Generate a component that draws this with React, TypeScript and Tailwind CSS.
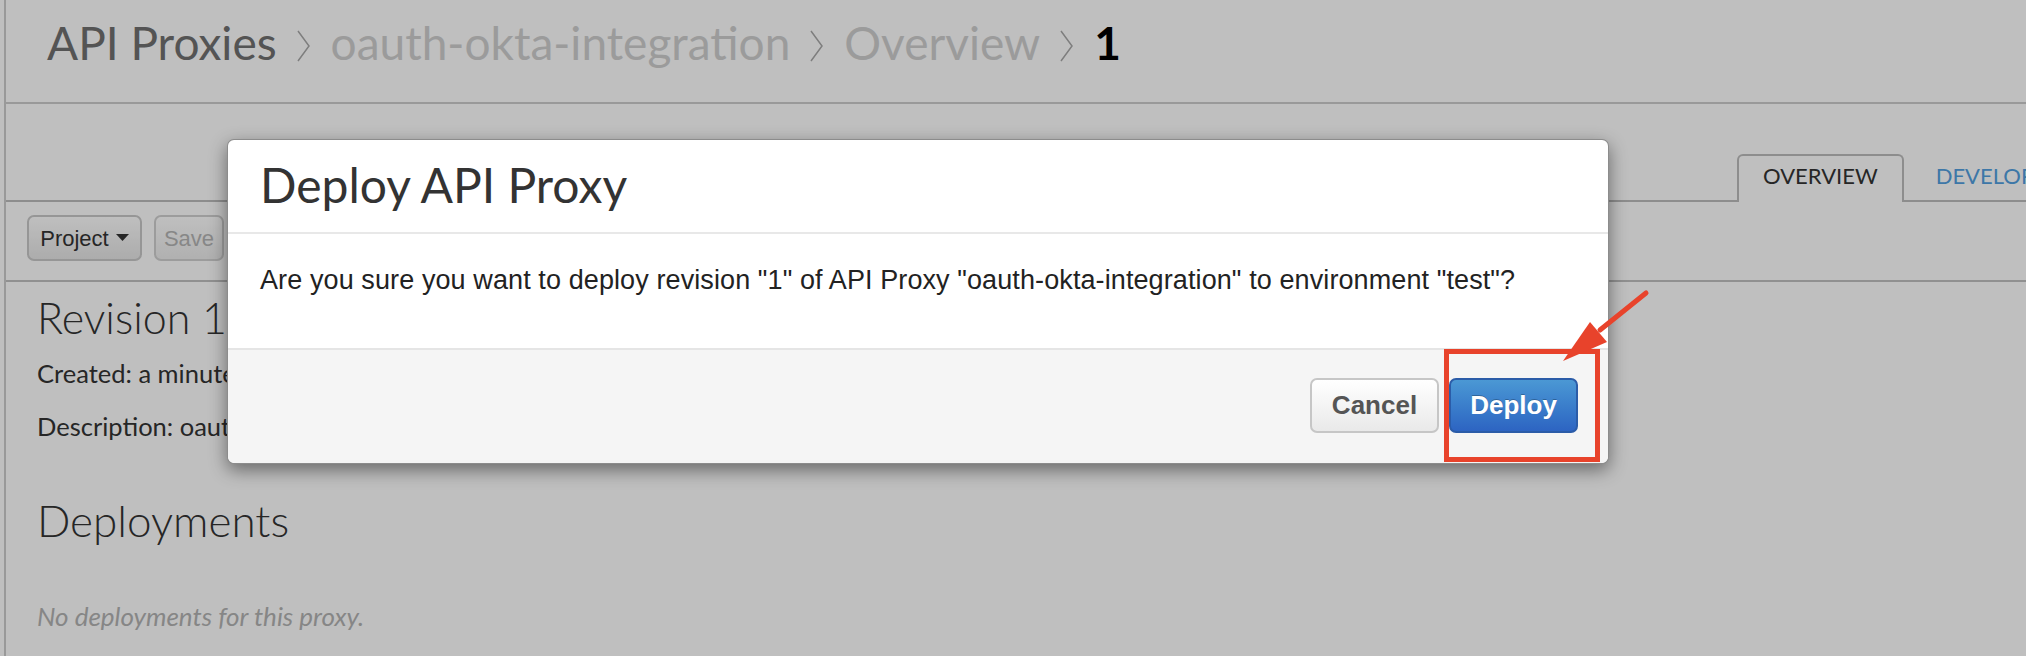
const Chevron = () => (
  <svg width="16" height="34" viewBox="0 0 16 34" className="mt-[14px] shrink-0">
    <polyline points="2,2 13,17 2,32" fill="none" stroke="#a8a8a8" strokeWidth="1.5" />
  </svg>
);

const Caret = () => (
  <svg width="13" height="8" viewBox="0 0 13 8" className="ml-[7px]">
    <polygon points="0,0 13,0 6.5,7" fill="#333" />
  </svg>
);

const App = () => {
  return (
    <div className="relative h-[656px] w-[2026px] overflow-hidden bg-white font-['Lato',sans-serif]">
      {/* page under the dialog */}
      <div className="ml-[4px] h-full border-l-2 border-[#cccccc]">
        <header className="flex h-[104px] items-start gap-[19px] border-b-2 border-[#cccccc] pl-[41px] pt-[15px] text-[46px] leading-[1.2]">
          <span className="text-[#707070]">API Proxies</span>
          <Chevron />
          <span className="text-[#cfcfcf]">oauth-okta-integration</span>
          <Chevron />
          <span className="text-[#cfcfcf]">Overview</span>
          <Chevron />
          <span className="font-bold text-black">1</span>
        </header>

        <div className="flex h-[98px] items-end border-b-2 border-[#bdbdbd]">
          <ul className="-mb-[2px] ml-[1731px] flex shrink-0 gap-[6px] text-[22px] leading-[1.2]">
            <li className="h-[48px] rounded-t-[6px] border-x-2 border-t-2 border-[#bdbdbd] bg-white px-[24px] pt-[7px] text-[#333]">
              OVERVIEW
            </li>
            <li className="h-[48px] border-2 border-transparent px-[24px] pt-[7px] text-[#529fdf]">DEVELOP</li>
          </ul>
        </div>

        <div className="flex h-[80px] gap-[12px] border-b-2 border-[#c0c0c0] pl-[21px] pt-[13px] font-['Liberation_Sans',Arial,sans-serif] text-[22px]">
          <button className="flex h-[46px] w-[115px] items-center justify-center rounded-[7px] border-2 border-[#c8c8c8] bg-gradient-to-b from-white to-[#e6e6e6] text-[#333]">
            Project
            <Caret />
          </button>
          <button className="h-[46px] w-[70px] rounded-[7px] border-2 border-[#d0d0d0] bg-gradient-to-b from-white to-[#ececec] text-[#b5b5b5]">
            Save
          </button>
        </div>

        <div className="pl-[31px] leading-[1.2] text-[#333]">
          <h1 className="mt-[10px] text-[43px] font-light">Revision 1</h1>
          <p className="mt-[14px] text-[25.5px]">Created: a minute ago</p>
          <p className="mt-[23px] text-[25.5px]">Description: oauth-okta-integration</p>
          <h2 className="mt-[52px] text-[44px] font-light">Deployments</h2>
          <p className="mt-[54px] text-[26px] italic text-[#b3b3b3]">No deployments for this proxy.</p>
        </div>
      </div>

      {/* backdrop */}
      <div className="absolute inset-0 bg-black/25" />

      {/* dialog */}
      <div className="absolute left-[227px] top-[139px] w-[1382px] rounded-[7px] border border-black/45 bg-white shadow-[0_6px_18px_rgba(0,0,0,0.45)]">
        <div className="border-b-2 border-[#e8e8e8] pl-[32px] pt-[16px] pb-[18px]">
          <h3 className="text-[48px] leading-[1.2] text-[#333]">Deploy API Proxy</h3>
        </div>
        <div className="pl-[32px] pt-[31px] pb-[52px] font-['Liberation_Sans',Arial,sans-serif] text-[27px] leading-[1.15] tracking-[0.1px] text-[#222]">
          Are you sure you want to deploy revision "1" of API Proxy "oauth-okta-integration" to environment "test"?
        </div>
        <div className="flex justify-end gap-[10px] rounded-b-[7px] border-t-2 border-[#e5e5e5] bg-[#f5f5f5] pt-[28px] pr-[30px] pb-[30px] font-['Liberation_Sans',Arial,sans-serif] text-[26px] font-bold">
          <button className="h-[55px] w-[129px] rounded-[7px] border-2 border-[#c6c6c6] bg-gradient-to-b from-white to-[#e9e9e9] text-[#555]">
            Cancel
          </button>
          <button className="h-[55px] w-[129px] rounded-[7px] border-2 border-[#2b5ca8] bg-gradient-to-b from-[#4b98d4] to-[#2d64c2] text-white [text-shadow:0_-1px_0_rgba(0,0,0,0.25)]">
            Deploy
          </button>
        </div>
      </div>

      {/* annotation */}
      <div className="absolute left-[1444px] top-[349px] h-[113px] w-[156px] border-[5px] border-[#e8432b]" />
      <svg className="absolute left-[1540px] top-[280px]" width="120" height="100" viewBox="0 0 120 100">
        <line x1="106" y1="13" x2="60" y2="50" stroke="#e8432b" strokeWidth="5" strokeLinecap="round" />
        <polygon points="23,81 67,62 50,42" fill="#e8432b" />
      </svg>
    </div>
  );
};

export default App;
